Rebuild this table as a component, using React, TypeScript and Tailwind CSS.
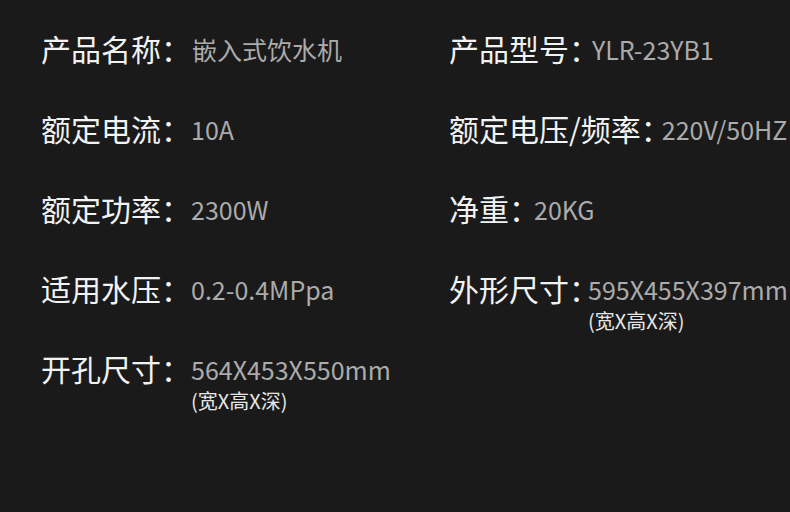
import React from 'react';

interface Spec {
  label: string;
  value: string;
  note?: string;
  shift: string;
}

const leftSpecs: Spec[] = [
  { label: '产品名称：', value: '嵌入式饮水机', shift: 'ml-[1px]' },
  { label: '额定电流：', value: '10A', shift: 'ml-[0px]' },
  { label: '额定功率：', value: '2300W', shift: 'ml-[0px]' },
  { label: '适用水压：', value: '0.2-0.4MPpa', shift: 'ml-[0px]' },
  { label: '开孔尺寸：', value: '564X453X550mm', note: '(宽X高X深)', shift: 'ml-[0px]' },
];

const rightSpecs: Spec[] = [
  { label: '产品型号：', value: 'YLR-23YB1', shift: '-ml-[7px]' },
  { label: '额定电压/频率：', value: '220V/50HZ', shift: '-ml-[9px]' },
  { label: '净重：', value: '20KG', shift: '-ml-[5px]' },
  { label: '外形尺寸：', value: '595X455X397mm', note: '(宽X高X深)', shift: '-ml-[11px]' },
];

const SpecRow: React.FC<{ spec: Spec }> = ({ spec }) => (
  <div className="h-[80px] flex items-start whitespace-nowrap">
    <span className="text-[30px] leading-[40px] text-[#f2f2f2]">{spec.label}</span>
    <div className={`flex flex-col ${spec.shift}`}>
      <span className="text-[25px] leading-[40px] pt-[1px] text-[#ababab]">{spec.value}</span>
      {spec.note && (
        <span className="mt-[2px] text-[20px] leading-[20px] text-[#e6e6e6]">{spec.note}</span>
      )}
    </div>
  </div>
);

const App: React.FC = () => {
  return (
    <div
      className="w-[790px] h-[512px] overflow-hidden bg-[#1a1a1a] pt-[28px] pl-[41px]"
      style={{ fontFamily: '"Noto Sans CJK SC", "Noto Sans", sans-serif' }}
    >
      <div className="grid grid-cols-[408px_1fr]">
        <div className="flex flex-col">
          {leftSpecs.map((spec) => (
            <SpecRow key={spec.label} spec={spec} />
          ))}
        </div>
        <div className="flex flex-col">
          {rightSpecs.map((spec) => (
            <SpecRow key={spec.label} spec={spec} />
          ))}
        </div>
      </div>
    </div>
  );
};

export default App;
